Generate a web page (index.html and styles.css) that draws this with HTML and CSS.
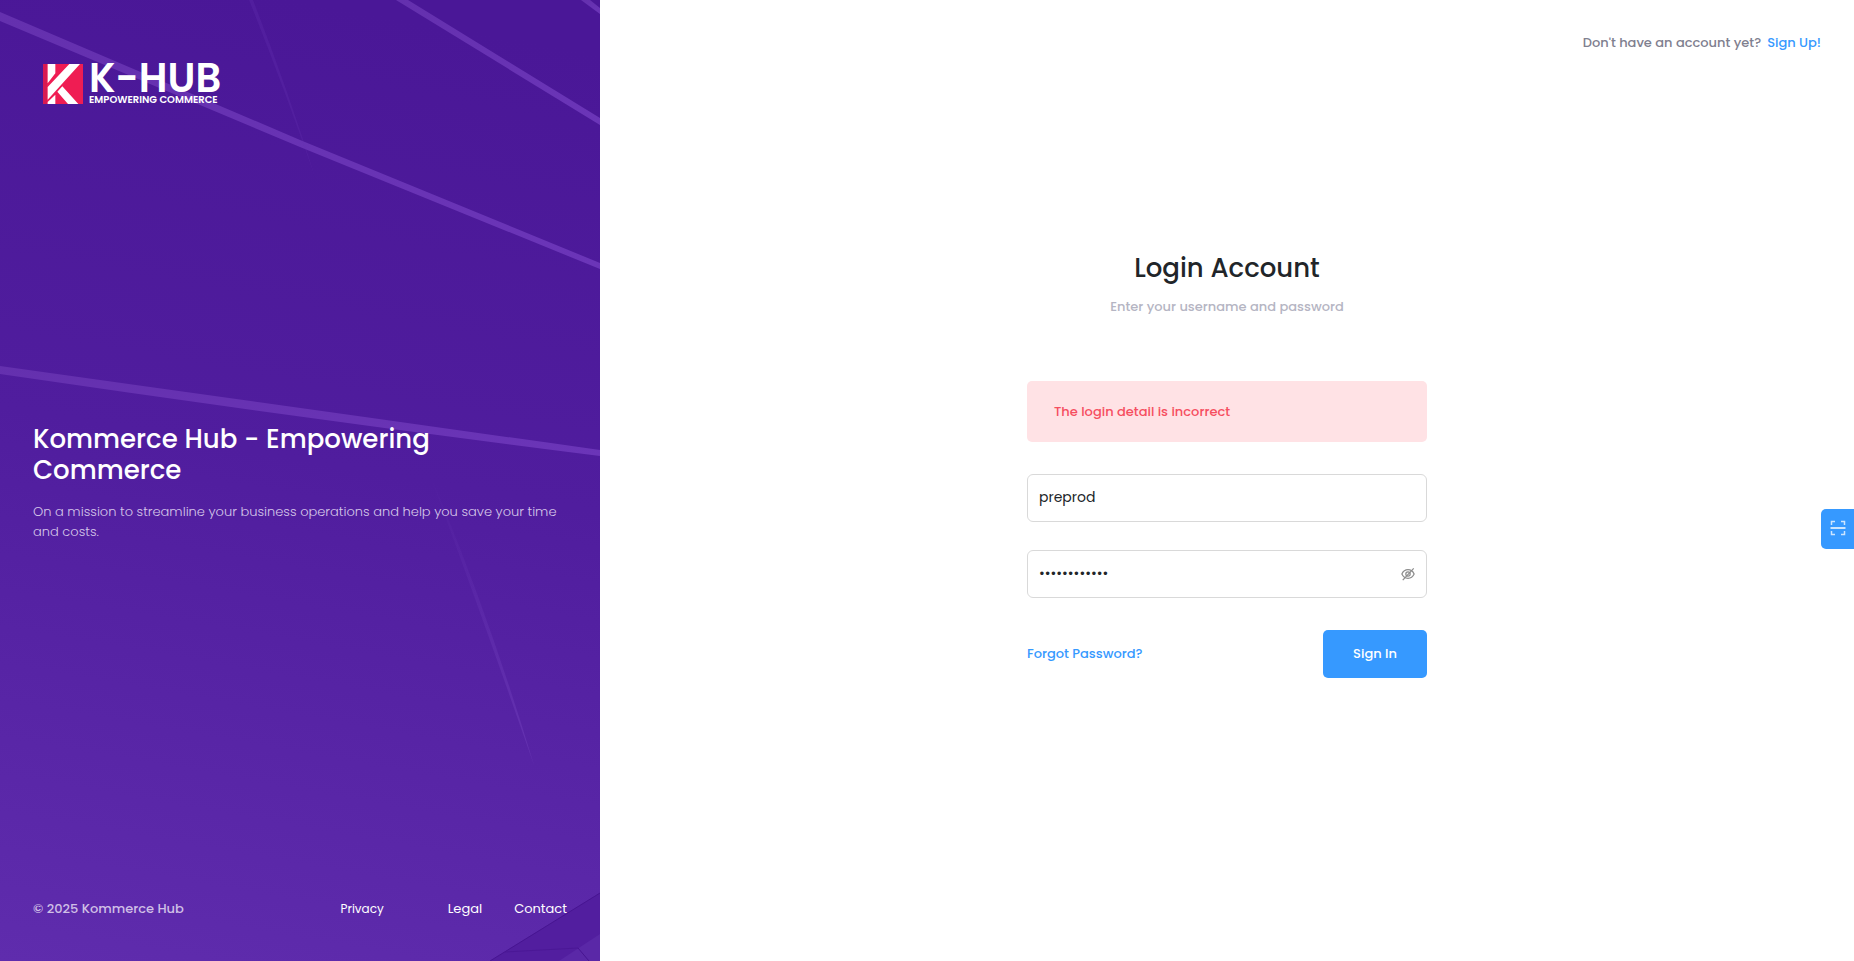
FILE: index.html
```html
<!DOCTYPE html>
<html lang="en">
<head>
<meta charset="utf-8">
<title>Login | K-Hub</title>
<link rel="stylesheet" href="styles.css">
</head>
<body>
<div class="page">
  <aside class="aside">
    <svg class="aside-art" viewBox="0 0 600 961" preserveAspectRatio="none" aria-hidden="true">
      <defs>
        <linearGradient id="beam" x1="0" y1="0" x2="0" y2="1">
          <stop offset="0" stop-color="#6430ae"/><stop offset="1" stop-color="#6b35b8"/>
        </linearGradient>
        <linearGradient id="ray" x1="0" y1="0" x2="0" y2="1">
          <stop offset="0" stop-color="#7a48c4" stop-opacity="0"/><stop offset="1" stop-color="#7a48c4" stop-opacity=".4"/>
        </linearGradient>
      </defs>
      <path d="M0 12 L300 140 L600 263 V269 L300 147 L0 21Z" fill="url(#beam)"/>
      <path d="M0 366 Q300 408 600 450 V456 Q300 418 0 374Z" fill="url(#beam)"/>
      <path d="M396 0 H408 L600 118 V125Z" fill="url(#beam)"/>
      <path d="M581 0 H590 L600 8 V14Z" fill="url(#beam)"/>
      <path d="M249 0 Q285 90 316 180 Q288 90 253 0Z" fill="#6935b4" opacity=".25"/>
      <path d="M428 470 Q484 600 534 765 Q480 610 428 470Z" fill="url(#ray)"/>
      <path d="M600 893 L490 961 H600Z" fill="#521e9f"/>
      <path d="M600 934 L559 961 H600Z" fill="#5a28a7"/>
      <path d="M600 893 L490 961 M578 948 L589 961" fill="none" stroke="#471591"/>
      <path d="M505 952 L578 948" fill="none" stroke="#4b1896"/>
    </svg>
    <a class="logo" href="#" aria-label="K-Hub">
      <svg class="logo-mark" viewBox="0 0 120 120" aria-hidden="true">
        <path d="M0 0H120V120H0Z" fill="#ef1d53"/>
        <path d="M0 0H12V120H0Z" fill="#d81a52"/>
        <path d="M14 0H37V28L14 58ZM79 0H111L14 107V69ZM37 92V120H14V114ZM58 67L106 120H75L43 83Z" fill="#fff"/>
      </svg>
      <span class="logo-words"><span class="logo-name">K-HUB</span><span class="logo-tag">EMPOWERING COMMERCE</span></span>
    </a>
    <section class="intro">
      <h1 class="intro-title">Kommerce Hub - Empowering Commerce</h1>
      <p class="intro-text">On a mission to streamline your business operations and help you save your time and costs.</p>
    </section>
    <footer class="footer">
      <span class="copyright">© 2025 Kommerce Hub</span>
      <nav class="footer-links">
        <a class="footer-link privacy" href="#">Privacy</a>
        <a class="footer-link" href="#">Legal</a>
        <a class="footer-link" href="#">Contact</a>
      </nav>
    </footer>
  </aside>
  <div class="content">
    <header class="signup"><span>Don't have an account yet?</span><a class="link" href="#">Sign Up!</a></header>
    <main class="main">
      <form class="form">
        <h2 class="form-title">Login Account</h2>
        <p class="form-sub">Enter your username and password</p>
        <div class="alert" role="alert">The login detail is incorrect</div>
        <input class="field" type="text" aria-label="Username" value="preprod">
        <div class="password">
          <input class="field" type="password" aria-label="Password" value="abcdefghijkl">
          <button class="eye" type="button" aria-label="Show password">
            <svg class="eye-icon" viewBox="0 0 16 16" fill="none" stroke="currentColor" stroke-width="1.4" aria-hidden="true">
              <path d="M1 8C4 1.500 12 1.500 15 8C12 14.500 4 14.500 1 8Z"/><circle cx="8" cy="8" r="2.500"/><path d="M14.500 1.500L2 15"/>
            </svg>
          </button>
        </div>
        <div class="actions">
          <a class="link" href="#">Forgot Password?</a>
          <button class="submit" type="submit">Sign In</button>
        </div>
      </form>
    </main>
  </div>
  <button class="scan" type="button" aria-label="Toggle full screen">
    <svg class="scan-icon" viewBox="0 0 16 16" fill="none" stroke="#fff" stroke-width="1.500" aria-hidden="true">
      <path d="M1.500 5V1.500H5M11 1.500H14.500V5M14.500 11V14.500H11M5 14.500H1.500V11" opacity=".75"/><path d="M.5 8H15.500"/>
    </svg>
  </button>
</div>
</body>
</html>
```
FILE: styles.css
```css
* { box-sizing: border-box; }
body {
  margin: 0;
  font: 500 13px/20px Poppins, Inter, "Open Sans", sans-serif;
  color: #212529;
  background: #fff;
}
h1, h2, p { margin: 0; }
a { text-decoration: none; }
button, input { font: inherit; }
button { border: 0; padding: 0; cursor: pointer; }
.page { display: flex; min-height: 100vh; }

.aside {
  position: relative;
  isolation: isolate;
  flex: 0 0 600px;
  display: flex;
  flex-direction: column;
  justify-content: space-between;
  padding: 62px 33px 42px;
  color: #fff;
  background: linear-gradient(190deg, #4a1797 5%, #501d9e 48%, #5f2cad 100%);
}
.aside-art { position: absolute; inset: 0; width: 100%; height: 100%; z-index: -1; }
.logo { display: flex; align-items: flex-end; gap: 6px; padding-left: 10px; color: #fff; }
.logo-mark { width: 40px; height: 40px; }
.logo-words { display: flex; flex-direction: column; gap: 1px; }
.logo-name { font-size: 40px; line-height: 32px; font-weight: 600; }
.logo-tag { font-size: 10px; line-height: 9px; font-weight: 600; }
.intro { display: flex; flex-direction: column; gap: 16px; padding-bottom: 38px; }
.intro-title { font-size: 26px; line-height: 31px; font-weight: 500; max-width: 440px; }
.intro-text { font-weight: 300; color: #d5c6e9; }
.footer { display: flex; justify-content: space-between; }
.copyright { color: #cfbfe6; }
.footer-links { display: flex; gap: 32px; }
.footer-link { font-weight: 400; color: #fff; }
.privacy { font-size: 12px; margin-right: 32px; }

.content { flex: 1; display: flex; flex-direction: column; }
.signup { display: flex; justify-content: flex-end; gap: 6px; padding: 33px 33px 0; color: #80808f; }
.link { color: #3699ff; }
.main { flex: 1; display: flex; justify-content: center; align-items: center; padding: 0 32px 84px; }
.form { width: 400px; display: flex; flex-direction: column; }
.form-title { font-size: 26px; line-height: 30px; font-weight: 500; text-align: center; }
.form-sub { margin-top: 14px; color: #b5b5c3; text-align: center; }
.alert { margin-top: 64px; padding: 20px 27px; line-height: 21px; border-radius: 5px; background: #ffe2e5; color: #f64e60; }
.field {
  width: 100%;
  height: 48px;
  margin-top: 32px;
  padding: 0 11px;
  border: 1px solid #d9d9d9;
  border-radius: 6px;
  background: #fff;
  color: #212529;
  font-size: 14px;
  font-weight: 400;
}
.password { position: relative; }
.password .field { margin-top: 28px; }
.eye { position: absolute; right: 12px; bottom: 16px; height: 16px; background: none; color: #8c8c8c; }
.eye-icon { display: block; width: 14px; height: 16px; }
.actions { display: flex; justify-content: space-between; align-items: center; margin-top: 32px; }
.submit { width: 104px; height: 48px; border-radius: 5px; background: #3699ff; color: #fff; }

.scan {
  position: fixed;
  right: 0;
  top: 53%;
  width: 33px;
  height: 40px;
  display: flex;
  justify-content: center;
  padding-top: 11px;
  border-radius: 5px 0 0 5px;
  background: #3699ff;
}
.scan-icon { width: 16px; height: 16px; }
```
